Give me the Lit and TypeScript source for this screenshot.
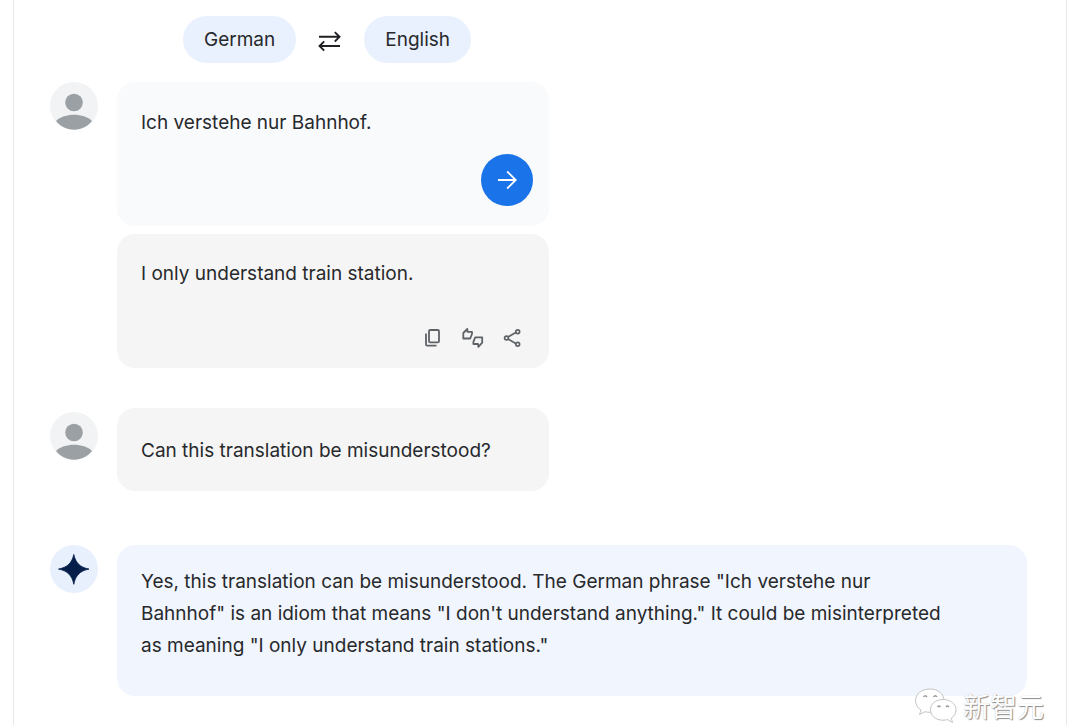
import { LitElement, html, css, svg } from "lit";
import { customElement, property, state } from "lit/decorators.js";

@customElement("chat-avatar")
export class ChatAvatar extends LitElement {
  @property() kind: "user" | "model" = "user";

  static styles = css`
    :host {
      display: block;
      width: 48px;
      height: 48px;
    }
    .icon {
      display: block;
      width: 100%;
      height: 100%;
    }
  `;

  render() {
    const user = svg`
      <circle cx="24" cy="24" r="24" fill="#f1f3f4" />
      <circle cx="24" cy="20.500" r="8.8" fill="#9aa0a4" />
      <path d="M6 39C10 35 17 32.800 24 32.800S38 35 42 39C38 44.200 31.5 47.700 24 47.700S10 44.200 6 39Z" fill="#9aa0a4" />`;
    const model = svg`
      <circle cx="24" cy="24" r="24" fill="#e8f0fe" />
      <path d="M23.8 9.500C25.6 17.8 30 22.300 39 24.100C30 25.900 25.6 30.300 23.8 39.300C22 30.300 17.5 25.900 8.5 24.100C17.5 22.300 22 17.8 23.8 9.500Z" fill="#041e49" stroke="#041e49" stroke-width=".8" />`;
    return html`<svg class="icon" viewBox="0 0 48 48" aria-hidden="true">
      ${this.kind === "user" ? user : model}
    </svg>`;
  }
}

@customElement("app-root")
export class AppRoot extends LitElement {
  @state() private source = "German";
  @state() private target = "English";

  static styles = css`
    :host {
      display: block;
      position: relative;
      overflow: hidden;
      min-height: 100vh;
      box-sizing: border-box;
      padding: 0 13px;
      background: #fff;
      color: #27292c;
      font: 19px/32px Inter, "Liberation Sans", sans-serif;
    }
    .panel {
      box-sizing: border-box;
      min-height: 100vh;
      padding: 16px 39px 28px 36px;
      border: solid #e6e7e9;
      border-width: 0 1px;
    }
    button {
      border: 0;
      padding: 0;
      background: none;
      color: inherit;
      font: inherit;
      cursor: pointer;
    }
    svg {
      display: block;
    }
    .languages {
      display: flex;
      align-items: center;
      gap: 19px;
      padding-left: 133px;
    }
    .pill {
      height: 47px;
      padding: 0 21px;
      border-radius: 24px;
      background: #e9f0fe;
    }
    .swap {
      padding: 4px 2px 0;
    }
    .row {
      display: grid;
      grid-template-columns: 48px minmax(0, 1fr);
      gap: 19px;
      align-items: start;
      margin-top: 19px;
    }
    .row.question {
      margin-top: 40px;
    }
    .row.question chat-avatar {
      padding-top: 4px;
    }
    .row.reply {
      margin-top: 54px;
    }
    .stack {
      display: grid;
      gap: 8px;
    }
    .bubble {
      box-sizing: border-box;
      width: 100%;
      max-width: 432px;
      border-radius: 18px;
      background: #f5f5f5;
    }
    .bubble p {
      margin: 0;
    }
    .compose {
      display: flex;
      flex-direction: column;
      gap: 15px;
      padding: 25px 16px 20px 24px;
      background: #f8fafc;
    }
    .entry {
      display: block;
      box-sizing: border-box;
      width: 100%;
      height: 32px;
      padding: 0;
      border: 0;
      outline: 0;
      overflow: hidden;
      resize: none;
      background: none;
      color: inherit;
      font: inherit;
    }
    .send {
      display: grid;
      place-items: center;
      align-self: flex-end;
      width: 52px;
      height: 52px;
      border-radius: 50%;
      background: #1a73e8;
    }
    .result {
      padding: 24px 25px 18px 24px;
    }
    .actions {
      display: flex;
      justify-content: flex-end;
      gap: 16px;
      margin-top: 36px;
      color: #5f6368;
    }
    .ask {
      padding: 27px 24px 24px;
    }
    .answer {
      max-width: none;
      padding: 21px 72px 34px 24px;
      background: #f1f5fd;
    }
    .watermark {
      position: absolute;
      right: 36px;
      bottom: 0;
      display: flex;
      align-items: center;
      gap: 5px;
      color: #fff;
      font: 27px/36px "Noto Sans CJK SC", sans-serif;
      text-shadow: 1px 1px 1px #8c8c8c, 0 0 1px #bbb;
    }
  `;

  private swap() {
    [this.source, this.target] = [this.target, this.source];
  }

  render() {
    return html`
      <main class="panel">
        <div class="languages">
          <button class="pill">${this.source}</button>
          <button class="swap" aria-label="Swap languages" @click=${this.swap}>
            <svg width="26" height="24" viewBox="0 0 26 24" fill="none" stroke="#202124" stroke-width="1.9">
              <path d="M2 6.800H22.5M17.8 2.1L22.5 6.800L17.8 11.500M23 16H2.5M7.2 11.300L2.5 16L7.2 20.700" />
            </svg>
          </button>
          <button class="pill">${this.target}</button>
        </div>

        <section class="row">
          <chat-avatar kind="user"></chat-avatar>
          <div class="stack">
            <div class="bubble compose">
              <textarea class="entry" rows="1" aria-label="Text to translate" spellcheck="false" .value=${"Ich verstehe nur Bahnhof."}></textarea>
              <button class="send" aria-label="Translate">
                <svg width="24" height="24" viewBox="0 0 24 24" fill="none" stroke="#fff" stroke-width="1.8">
                  <path d="M3 12H20.5M12.2 3.5L20.7 12L12.2 20.5" />
                </svg>
              </button>
            </div>
            <div class="bubble result">
              <p>I only understand train station.</p>
              <div class="actions">
                <button aria-label="Copy">
                  <svg width="24" height="24" viewBox="0 0 24 24" fill="none" stroke="currentColor" stroke-width="1.8">
                    <rect x="9" y="4" width="10" height="12.4" rx="1.2" />
                    <path d="M6 7.500V18.500Q6 19.700 7.200 19.700H16.500" />
                  </svg>
                </button>
                <button aria-label="Rate translation">
                  <svg width="24" height="24" viewBox="0 0 24 24" fill="none" stroke="currentColor" stroke-width="1.8" stroke-linejoin="round">
                    <path d="M3.300 12.500V7L7.300 3L7.500 5.800H12V8L10.200 12.500Z" />
                    <path d="M22.200 11.300V16.700L18.400 20.800L18 18H13.400V15.800L15.200 11.300Z" />
                  </svg>
                </button>
                <button aria-label="Share">
                  <svg width="24" height="24" viewBox="0 0 24 24" fill="none" stroke="currentColor" stroke-width="1.7">
                    <path d="M8 11L16.2 6.3M8 13L16.2 17.7" />
                    <circle cx="6.500" cy="12" r="1.9" />
                    <circle cx="17.7" cy="5.8" r="1.9" />
                    <circle cx="17.7" cy="18.2" r="1.9" />
                  </svg>
                </button>
              </div>
            </div>
          </div>
        </section>

        <section class="row question">
          <chat-avatar kind="user"></chat-avatar>
          <div class="bubble ask"><p>Can this translation be misunderstood?</p></div>
        </section>

        <section class="row reply">
          <chat-avatar kind="model"></chat-avatar>
          <div class="bubble answer">
            <p>
              Yes, this translation can be misunderstood. The German phrase "Ich verstehe nur
              Bahnhof" is an idiom that means "I don't understand anything." It could be misinterpreted
              as meaning "I only understand train stations."
            </p>
          </div>
        </section>
      </main>

      <div class="watermark">
        <svg width="44" height="38" viewBox="0 0 44 38" fill="#fff" stroke="#c4c4c4" stroke-width="1">
          <path d="M16 2C7.500 2 1.500 7 1.500 13.500C1.500 17.500 3.500 20.700 7 23L5.500 27.500L11 24.700C12.600 25.100 14.300 25.300 16 25.300C24 25.300 30 20.200 30 13.500C30 7 24 2 16 2Z" />
          <path d="M29 12.500C21.500 12.500 16.500 17 16.500 22.800C16.500 28.700 21.500 33.200 29 33.200C30.700 33.200 32.200 33 33.500 32.600L38.500 35.500L37.300 31.200C40.300 29.200 42 26.300 42 22.800C42 17 36.700 12.500 29 12.500Z" />
          <path d="M9.500 10Q11.200 7.500 13 10M19.500 10Q21.300 7.500 23 10M23.500 20Q25 18 26.500 20M32 20Q33.500 18 35 20" fill="none" stroke="#999" stroke-width="1.300" />
        </svg>
        <span>新智元</span>
      </div>
    `;
  }
}
